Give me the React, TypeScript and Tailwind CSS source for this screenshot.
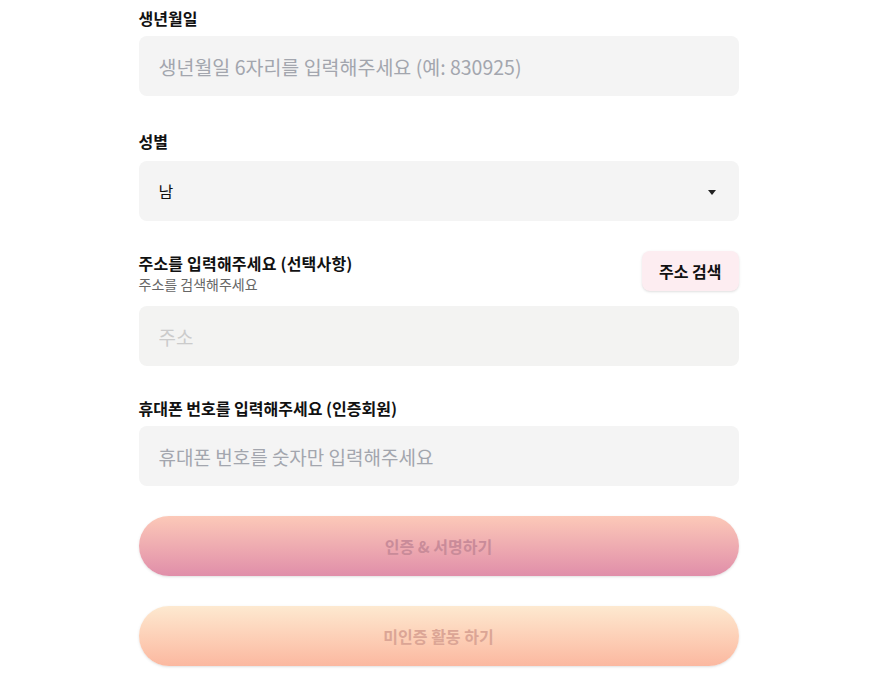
import { useState } from 'react';

const font = { fontFamily: '"Noto Sans CJK KR", "Noto Sans", sans-serif' };

export default function App() {
  const [birth, setBirth] = useState('');
  const [gender, setGender] = useState('남');
  const [phone, setPhone] = useState('');

  return (
    <div className="min-h-screen bg-white" style={font}>
      <div className="mx-auto w-[600px] pt-1.5 pb-5">
        {/* 생년월일 */}
        <label className="block text-[16px] leading-6 font-bold text-[#111] mb-1.5">생년월일</label>
        <input
          value={birth}
          onChange={(e) => setBirth(e.target.value)}
          placeholder="생년월일 6자리를 입력해주세요 (예: 830925)"
          className="block w-full h-[60px] rounded-lg bg-[#f4f4f4] px-5 text-[19.5px] text-[#111] placeholder:text-[#a3a6ae] outline-none"
        />

        {/* 성별 */}
        <label className="block mt-[33px] text-[16px] leading-6 font-bold text-[#111] mb-2">성별</label>
        <div className="relative">
          <select
            value={gender}
            onChange={(e) => setGender(e.target.value)}
            className="block w-full h-[60px] appearance-none rounded-lg bg-[#f4f4f4] px-5 text-[16px] text-[#111] outline-none"
          >
            <option value="남">남</option>
            <option value="여">여</option>
          </select>
          <svg className="absolute right-[23px] top-[29px] w-2 h-[5px] pointer-events-none" viewBox="0 0 8 5">
            <path d="M0 0h8L4 5z" fill="#222" />
          </svg>
        </div>

        {/* 주소 */}
        <div className="mt-[30px] flex items-start justify-between">
          <div>
            <div className="mt-0.5 text-[16px] leading-5 font-bold text-[#111] tracking-[0.2px]">주소를 입력해주세요 (선택사항)</div>
            <div className="mt-[3px] text-[14px] leading-4 text-[#666]">주소를 검색해주세요</div>
          </div>
          <button className="h-10 px-[17px] rounded-lg bg-[#fdedf1] shadow-sm text-[16px] font-bold text-[#111]">
            주소 검색
          </button>
        </div>
        <input
          readOnly
          placeholder="주소"
          className="block mt-[14px] w-full h-[60px] rounded-lg bg-[#f3f3f2] px-5 text-[19px] text-[#111] placeholder:text-[#cbcbcb] outline-none"
        />

        {/* 휴대폰 */}
        <label className="block mt-[30px] text-[16px] leading-6 font-bold text-[#111] mb-1.5">
          휴대폰 번호를 입력해주세요 (인증회원)
        </label>
        <input
          value={phone}
          onChange={(e) => setPhone(e.target.value)}
          placeholder="휴대폰 번호를 숫자만 입력해주세요"
          className="block w-full h-[60px] rounded-lg bg-[#f4f4f4] px-5 text-[19px] text-[#111] placeholder:text-[#a3a6ae] outline-none"
        />

        {/* 버튼 */}
        <button className="mt-[30px] block w-full h-[60px] rounded-full bg-gradient-to-b from-[#fcc9b8] to-[#e08ea9] shadow-sm text-[16px] font-bold text-[#c98b99]">
          인증 &amp; 서명하기
        </button>
        <button className="mt-[30px] block w-full h-[60px] rounded-full bg-gradient-to-b from-[#fde9d0] to-[#fbb8a0] shadow-sm text-[16px] font-bold text-[#dba595]">
          미인증 활동 하기
        </button>
      </div>
    </div>
  );
}
